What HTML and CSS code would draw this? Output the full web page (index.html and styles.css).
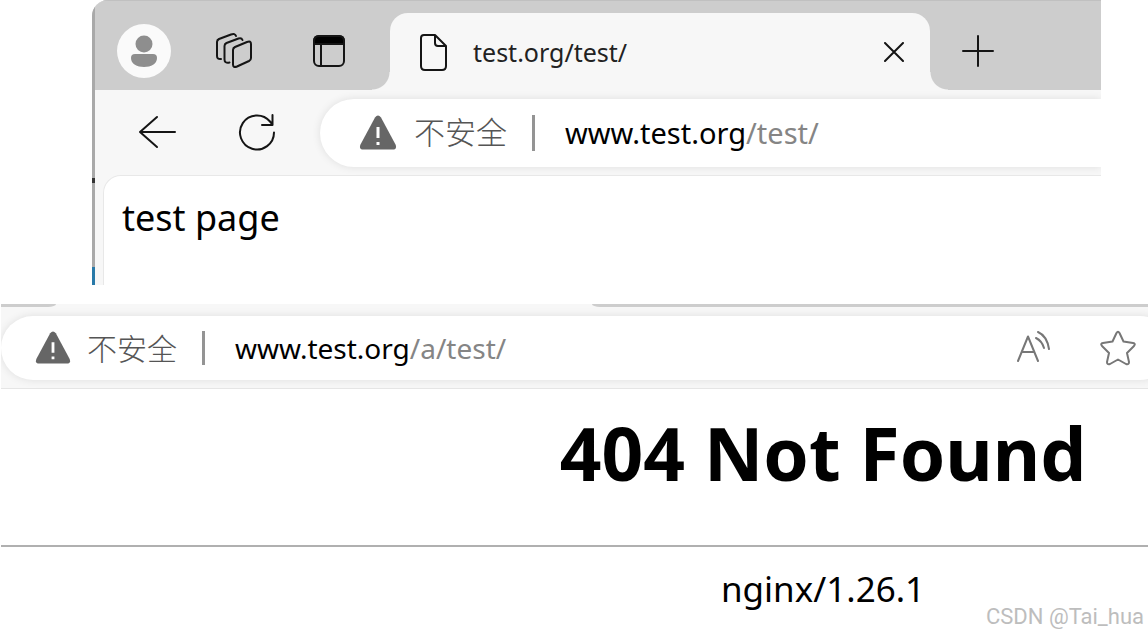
FILE: index.html
```html
<!DOCTYPE html>
<html lang="zh-CN">
<head>
	<meta charset="utf-8">
	<title>test.org/test/</title>
	<link rel="stylesheet" href="styles.css">
</head>
<body>
	<section class="browser">
		<div class="edge"><i class="edge-dark"></i><i class="edge-blue"></i></div>
		<div class="window">
			<div class="tabs">
				<button class="profile" aria-label="Profile">
					<svg width="54" height="54" viewBox="0 0 54 54"><circle cx="27" cy="20" r="8.5"/><path d="M18 30h18q4 0 4 4c0 6-6 9-13 9s-13-3-13-9q0-4 4-4z"/></svg>
				</button>
				<button class="icon-btn" aria-label="Workspaces">
					<svg class="line" width="40" height="40" viewBox="0 0 40 40"><path d="M21 16l12-5q4-1.500 4 2v14q0 2-2 3l-12 5.500q-4 1.500-4-2V19q0-2 2-3z"/><path d="M15.500 31.500q-5 1-5-3V15q0-2 2-3l12-4.500q3-1 4 1.500"/><path d="M7 28q-4 .5-4-3V11q0-2 2-3l12-4.500q4-1.500 5 1.500"/></svg>
				</button>
				<button class="icon-btn" aria-label="Tab actions">
					<svg class="line" width="40" height="40" viewBox="0 0 40 40"><rect x="5" y="5" width="30" height="30" rx="5"/><path d="M12 12v23"/><path class="solid" d="M5 13v-3q0-5 5-5h20q5 0 5 5v3z"/></svg>
				</button>
				<div class="tab">
					<svg class="line" width="30" height="38" viewBox="0 0 30 38"><path d="M5 2h11l11 11v20q0 4-4 4H6q-4 0-4-4V5q0-3 3-3zM16 2v8q0 3 3 3h8"/></svg>
					<span class="tab-title">test.org/test/</span>
					<button class="close" aria-label="Close tab">
						<svg class="line" width="20" height="20" viewBox="0 0 20 20"><path d="M1 1l18 18M19 1L1 19"/></svg>
					</button>
				</div>
				<button class="new-tab" aria-label="New tab">
					<svg class="line" width="34" height="34" viewBox="0 0 34 34"><path d="M17 2v30M2 17h30"/></svg>
				</button>
			</div>
			<div class="toolbar">
				<button class="icon-btn" aria-label="Back">
					<svg class="line" width="40" height="40" viewBox="0 0 40 40"><path d="M38 20H3M20 5L3 20l17 15"/></svg>
				</button>
				<button class="icon-btn reload" aria-label="Refresh">
					<svg class="line" width="40" height="40" viewBox="0 0 40 40"><path d="M37 20.500a17 17 0 1 1-4-11l2.500 3M35.500 3v10H25"/></svg>
				</button>
				<div class="address">
					<svg class="warning" width="38" height="36" viewBox="0 0 38 36"><path d="M16 2.500q3-4 6 0l14.500 27q2 5-3 5h-29q-5 0-3-5z"/><path class="mark" d="M19 12v11M19 27v3"/></svg>
					<span class="label">不安全</span>
					<span class="divider"></span>
					<div class="url" role="textbox" aria-label="Address" contenteditable="true" spellcheck="false">www.test.org<span>/test/</span></div>
				</div>
			</div>
			<main class="page">test page</main>
		</div>
	</section>

	<section class="browser-error">
		<div class="tabs-bottom"><i></i><b></b></div>
		<div class="toolbar-error">
			<div class="address address-error">
				<svg class="warning" width="36" height="34" viewBox="0 0 38 36"><path d="M16 2.500q3-4 6 0l14.500 27q2 5-3 5h-29q-5 0-3-5z"/><path class="mark" d="M19 12v11M19 27v3"/></svg>
				<span class="label">不安全</span>
				<span class="divider"></span>
				<div class="url" role="textbox" aria-label="Address" contenteditable="true" spellcheck="false">www.test.org<span>/a/test/</span></div>
				<button class="icon-btn" aria-label="Read aloud">
					<svg class="line" width="36" height="36" viewBox="0 0 36 36"><path d="M4 31L14 6.500 24 31M8 22h12M22 8q6 3 8 10M24 2q9 4 11 17"/></svg>
				</button>
				<button class="icon-btn" aria-label="Favorite">
					<svg class="line" width="36" height="36" viewBox="0 0 36 36"><path d="M16.500 3q1.500-2.500 3 0l4 8.500 9.500 1.500q3 .5 1 3l-7 7 2 9q0 3-3 2l-8-4.500-8 4.500q-3 1-3-2l2-9-7-7q-2-2.500 1-3l9.500-1.500z"/></svg>
				</button>
			</div>
		</div>
		<main class="error">
			<h1>404 Not Found</h1>
			<hr>
			<p>nginx/1.26.1</p>
		</main>
	</section>
	<div class="watermark">CSDN @Tai_hua</div>
</body>
</html>
```
FILE: styles.css
```css
* {
	box-sizing: border-box;
}

body {
	margin: 0;
	background-color: #FFFFFF;
	color: #000000;
	font-family: "Noto Sans", "Open Sans", "Noto Sans CJK SC", sans-serif;
	overflow: hidden;
}

button {
	display: flex;
	align-items: center;
	justify-content: center;
	flex: none;
	padding: 0;
	border: none;
	background: none;
	cursor: pointer;
}

svg {
	display: block;
	flex: none;
}

.line {
	fill: none;
	stroke: #151515;
	stroke-width: 2;
	stroke-linecap: round;
	stroke-linejoin: round;
}

.line .solid {
	fill: #000000;
}

.browser {
	display: flex;
	margin: 0 47px 19px 92px;
	background-color: #CDCDCD;
	border-top-left-radius: 16px;
	overflow: hidden;
}

.edge {
	display: flex;
	flex-direction: column;
	justify-content: flex-end;
	gap: 84px;
	width: 3px;
	background-color: #A9A9A9;
}

.edge-dark {
	height: 5px;
	background-color: #333333;
}

.edge-blue {
	height: 18px;
	background-color: #2879A8;
}

.window {
	flex: 1;
	min-width: 0;
	background-color: #F7F7F7;
}

.tabs {
	display: flex;
	align-items: center;
	height: 90px;
	padding-top: 11px;
	padding-left: 22px;
	border-top: 1px solid #C0C0C0;
	background-color: #CDCDCD;
}

.profile {
	width: 54px;
	height: 54px;
	margin-right: 43px;
	border-radius: 50%;
	background-color: #FAFAFA;
	fill: #8E8E8E;
}

.icon-btn {
	width: 40px;
	height: 40px;
}

.tabs .icon-btn {
	margin-right: 55px;
}

.tabs .icon-btn + .icon-btn {
	margin-right: 41px;
}

.tab {
	position: relative;
	display: flex;
	align-items: center;
	align-self: flex-end;
	width: 540px;
	height: 77px;
	padding: 0 26px 0 29px;
	border-radius: 18px 18px 0 0;
	background-color: #F7F7F7;
}

.tab::before,
.tab::after {
	content: "";
	position: absolute;
	bottom: 0;
	width: 18px;
	height: 18px;
}

.tab::before {
	right: 100%;
	background: radial-gradient(circle at 0 0, #CDCDCD 17px, #F7F7F7 18px);
}

.tab::after {
	left: 100%;
	background: radial-gradient(circle at 100% 0, #CDCDCD 17px, #F7F7F7 18px);
}

.tab-title {
	flex: 1;
	margin-left: 24px;
	font-size: 25px;
	line-height: 36px;
	color: #222222;
}

.new-tab {
	margin-left: 31px;
}

.toolbar {
	display: flex;
	align-items: center;
	height: 85px;
	padding-left: 42px;
}

.toolbar .icon-btn {
	padding-bottom: 2px;
}

.reload {
	margin: 0 43px 0 60px;
}

.address {
	display: flex;
	align-items: center;
	flex: 1;
	height: 68px;
	padding-left: 39px;
	border-radius: 34px 0 0 34px;
	background-color: #FFFFFF;
	box-shadow: 0 0 8px rgba(0, 0, 0, 0.1);
}

.warning {
	fill: #666666;
}

.warning .mark {
	stroke: #FFFFFF;
	stroke-width: 3;
}

.label {
	margin-left: 17px;
	padding-bottom: 3px;
	font-family: "Noto Sans CJK SC", sans-serif;
	font-size: 31px;
	font-weight: 300;
	line-height: 40px;
	color: #555555;
}

.divider {
	width: 3px;
	height: 36px;
	margin: 0 30px 0 25px;
	background-color: #949494;
}

.url {
	flex: 1;
	font-size: 29px;
	line-height: 40px;
	white-space: nowrap;
	outline: none;
}

.url span {
	color: #858585;
}

.page {
	height: 110px;
	margin-left: 8px;
	padding: 16px 18px;
	border-top: 1px solid #E8E8E8;
	border-left: 1px solid #E8E8E8;
	border-top-left-radius: 18px;
	background-color: #FFFFFF;
	font-size: 36px;
	line-height: 52px;
}

.browser-error {
	margin-left: 1px;
	overflow: hidden;
}

.tabs-bottom {
	display: flex;
	justify-content: space-between;
	height: 3px;
	background-color: #F7F7F7;
}

.tabs-bottom i {
	width: 55px;
	border-bottom-right-radius: 8px 3px;
	background-color: #CDCDCD;
}

.tabs-bottom b {
	width: 556px;
	border-bottom-left-radius: 8px 3px;
	background-color: #CDCDCD;
}

.toolbar-error {
	display: flex;
	height: 82px;
	padding-top: 9px;
	border-bottom: 1px solid #E5E5E5;
	background-color: #F7F7F7;
}

.address-error {
	height: 64px;
	margin-right: -24px;
	padding: 0 34px;
	border-radius: 32px;
}

.address-error .label {
	margin-left: 16px;
	font-size: 30px;
}

.address-error .divider {
	height: 34px;
}

.address-error .url {
	font-size: 28px;
}

.address-error .icon-btn + .icon-btn {
	margin-left: 46px;
}

.address-error .line {
	stroke: #777777;
}

.error h1,
.error p {
	margin: 0;
	padding-left: 497px;
	text-align: center;
	white-space: nowrap;
}

.error h1 {
	padding-top: 14px;
	font-size: 73px;
	line-height: 100px;
}

.error hr {
	height: 2px;
	margin: 42px 0 16px;
	border: none;
	background-color: #B0B0B0;
}

.error p {
	font-size: 35px;
	line-height: 52px;
}

.watermark {
	position: absolute;
	right: 4px;
	bottom: 5px;
	font-family: Roboto, sans-serif;
	font-size: 22px;
	line-height: 28px;
	color: #BDBDBD;
}
```
